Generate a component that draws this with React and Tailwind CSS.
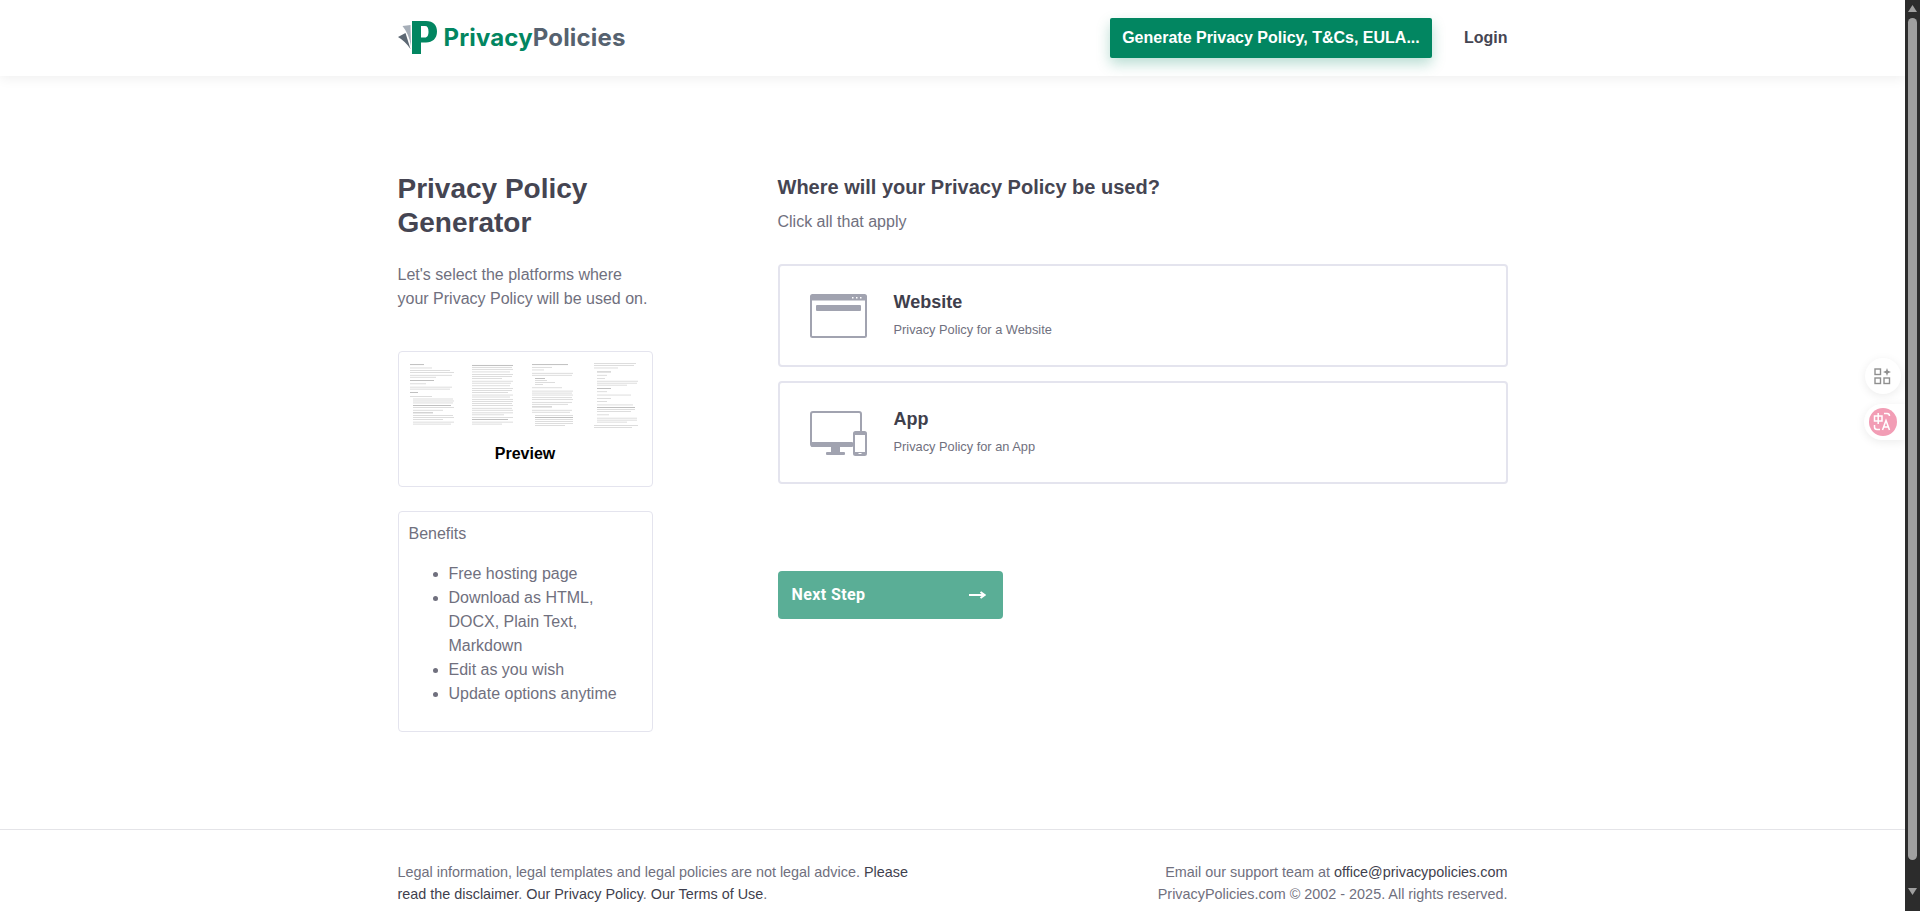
import React from "react";

const pages = [
  { x: 0, lines: [[0,2,14,1],[0,7,22,0],[0,11,40,0],[0,14,44,0],[0,18,42,0],[0,21,26,0],[0,26,24,1],[0,31,16,0],[0,36,42,0],[0,39,40,0],[0,44,8,1],[0,50,22,0],[3,54,40,0],[3,57,41,0],[3,60,40,0],[3,64,38,1],[3,67,41,0],[3,71,30,0],[3,75,20,1],[3,79,40,0],[3,82,41,0],[3,85,30,0],[3,89,41,0],[3,92,38,0]] },
  { x: 62, lines: [[0,3,41,1],[0,6,40,0],[0,9,41,0],[0,13,38,0],[0,17,41,0],[0,20,40,0],[0,23,30,0],[0,27,41,0],[0,30,39,0],[0,34,38,0],[0,38,41,0],[0,41,40,0],[0,44,36,0],[0,48,41,0],[0,51,38,0],[0,55,41,0],[0,58,41,0],[0,61,40,0],[0,64,41,0],[0,68,40,0],[0,71,41,0],[0,75,41,0],[0,78,32,0],[0,82,41,0],[0,85,36,1],[0,89,41,0],[0,92,30,0]] },
  { x: 122, lines: [[0,2,36,1],[0,6,20,0],[0,10,12,0],[0,15,41,0],[0,18,40,0],[3,23,10,1],[3,26,12,0],[3,29,20,0],[3,32,8,0],[0,37,30,0],[0,42,41,0],[0,45,40,0],[0,48,41,0],[0,52,40,0],[0,55,41,0],[0,59,40,0],[0,62,36,0],[0,66,20,1],[0,71,40,0],[0,74,38,0],[3,79,38,0],[3,82,38,1],[3,85,38,0],[3,88,38,0],[3,91,38,0],[3,94,30,0]] },
  { x: 184, lines: [[0,0,42,0],[0,3,40,0],[0,7,24,0],[3,13,14,1],[3,18,10,0],[3,23,8,0],[3,27,41,0],[3,30,40,0],[3,33,30,0],[3,38,14,1],[3,43,10,0],[3,48,34,0],[3,53,14,0],[3,58,10,0],[3,63,36,0],[3,67,38,1],[3,70,38,0],[3,73,34,0],[3,78,12,0],[3,83,40,0],[3,86,40,0],[3,89,30,0],[0,94,44,0],[0,97,38,0]] },
];

function DocPreview() {
  return (
    <svg width="232" height="66" viewBox="0 0 232 100" preserveAspectRatio="none" className="block blur-[0.5px]">
      {pages.map((p, i) => (
        <g key={i}>
          {p.lines.map((l, j) => (
            <rect key={j} x={p.x + l[0]} y={l[1]} width={l[2]} height="1.1" fill={l[3] ? "#a8a8a8" : "#d0d0d0"} />
          ))}
        </g>
      ))}
    </svg>
  );
}

function Logo() {
  return (
    <svg width="40" height="36" viewBox="0 0 40 36" className="block">
      <path d="M0 17 L7.5 13 L12.5 29 Q7 21 0 17 Z" fill="#5c6773" />
      <path d="M4.5 6 L12.5 5 L13 26 Q11 14 4.5 6 Z" fill="#a6aeb8" />
      <path d="M14 1 H28 C35.5 1 39 5.5 39 11.5 C39 18.5 34.5 22.5 28 22.5 H23 V34 H14 Z M23 6 V17.5 H27 C29.5 17.5 30.5 15 30.5 11.7 C30.5 8 29.5 6 27 6 Z" fill="#028661" fillRule="evenodd" />
    </svg>
  );
}

function WebsiteIcon() {
  return (
    <svg width="57" height="45" viewBox="0 0 57 45" className="block">
      <rect x="1" y="1" width="55" height="42" rx="1.5" fill="none" stroke="#a1a3b0" strokeWidth="2" />
      <rect x="1" y="1" width="55" height="5.5" fill="#a1a3b0" />
      <rect x="6" y="11" width="45" height="6" rx="1" fill="#a1a3b0" />
      <rect x="42" y="3" width="1.5" height="1.5" fill="#fff" />
      <rect x="46" y="3" width="1.5" height="1.5" fill="#fff" />
      <rect x="50" y="3" width="1.5" height="1.5" fill="#fff" />
    </svg>
  );
}

function AppIcon() {
  return (
    <svg width="57" height="45" viewBox="0 0 57 45" className="block">
      <path d="M51 20 V3 Q51 1 49 1 H3 Q1 1 1 3 V33 Q1 35 3 35 H42" fill="none" stroke="#a1a3b0" strokeWidth="2" />
      <rect x="1" y="31" width="42" height="5" rx="1" fill="#a1a3b0" />
      <rect x="21" y="36" width="9" height="6" fill="#a1a3b0" />
      <rect x="16" y="41" width="19" height="3" rx="1" fill="#a1a3b0" />
      <rect x="44" y="21" width="12" height="23" rx="1.5" fill="#fff" stroke="#a1a3b0" strokeWidth="2" />
      <rect x="44" y="21" width="12" height="3" fill="#a1a3b0" />
      <rect x="44" y="41" width="12" height="3" fill="#a1a3b0" />
      <rect x="48.5" y="42" width="3" height="1" fill="#fff" />
    </svg>
  );
}

function OptionCard({ icon, title, desc }) {
  return (
    <div className="h-[103px] rounded border-2 border-[#e4e4ee] bg-white flex items-center pl-[30px]">
      <div className="w-[57px] shrink-0 mt-[2px]">{icon}</div>
      <div className="ml-[27px] -mt-[2px]">
        <div className="text-[18px] leading-[24px] font-bold text-[#3f3f4c]">{title}</div>
        <div className="mt-[7px] text-[12.8px] leading-[18px] text-[#70707e]">{desc}</div>
      </div>
    </div>
  );
}

export default function App() {
  return (
    <div className="relative flex h-[911px] w-full overflow-hidden bg-white font-['Liberation_Sans',Arial,sans-serif]">
      <div className="flex-1 min-w-0 flex flex-col">
        <header className="h-[76px] shrink-0 bg-white shadow-[0_2px_12px_rgba(0,0,0,0.07)] relative z-10">
          <div className="w-[1110px] mx-auto h-full flex items-center justify-between">
            <div className="flex items-center -mt-[1px]">
              <Logo />
              <div className="ml-[6px] text-[24px] font-bold leading-[30px] tracking-[0.15px] font-['Inter','Liberation_Sans',sans-serif]">
                <span className="text-[#028661]">Privacy</span>
                <span className="text-[#56626f]">Policies</span>
              </div>
            </div>
            <div className="flex items-center">
              <div className="h-[40px] w-[322px] rounded-[2px] bg-[#028661] text-white text-[16px] font-bold flex items-center justify-center shadow-[0_6px_14px_rgba(2,134,97,0.28)]">
                Generate Privacy Policy, T&amp;Cs, EULA...
              </div>
              <div className="ml-[32px] text-[16px] font-bold text-[#454552]">Login</div>
            </div>
          </div>
        </header>

        <main className="w-[1110px] mx-auto flex-1 flex pt-[95px]">
          <aside className="w-[255px] shrink-0">
            <h1 className="mt-[1px] text-[28px] leading-[34px] font-bold text-[#454552]">Privacy Policy<br />Generator</h1>
            <p className="mt-[23px] text-[16px] leading-[24px] text-[#70707e]">Let's select the platforms where<br />your Privacy Policy will be used on.</p>
            <div className="mt-[40px] h-[136px] rounded border border-[#e4e4ee] pt-[11px] px-[11px]">
              <DocPreview />
              <div className="mt-[15px] text-center text-[16px] leading-[20px] font-bold text-black">Preview</div>
            </div>
            <div className="mt-[24px] h-[221px] rounded border border-[#e4e4ee] pt-[11px] px-[10px] text-[16px] text-[#70707e]">
              <div className="leading-[22px]">Benefits</div>
              <ul className="mt-[17px] ml-[40px] mr-[8px] list-disc leading-[24px]">
                <li>Free hosting page</li>
                <li>Download as HTML, DOCX, Plain Text, Markdown</li>
                <li>Edit as you wish</li>
                <li>Update options anytime</li>
              </ul>
            </div>
          </aside>
          <section className="ml-[125px] flex-1 min-w-0">
            <h2 className="text-[20px] leading-[28px] font-bold text-[#454552] mt-[2px]">Where will your Privacy Policy be used?</h2>
            <p className="mt-[9px] text-[16px] leading-[24px] text-[#70707e]">Click all that apply</p>
            <div className="mt-[30px] flex flex-col gap-[14px]">
              <OptionCard icon={<WebsiteIcon />} title="Website" desc="Privacy Policy for a Website" />
              <OptionCard icon={<AppIcon />} title="App" desc="Privacy Policy for an App" />
            </div>
            <div className="mt-[87px] h-[48px] w-[225px] rounded bg-[#5aae96] text-white flex items-center justify-between pl-[14px] pr-[17px] font-['Roboto',sans-serif]">
              <span className="text-[16px] font-bold tracking-[0.4px]">Next Step</span>
              <svg width="17" height="10" viewBox="0 0 17 10"><path d="M0 5 H15 M11.5 2 L15.5 5 L11.5 8" fill="none" stroke="#fff" strokeWidth="2" /></svg>
            </div>
          </section>
        </main>

        <footer className="h-[82px] shrink-0 border-t border-[#e4e4e8]">
          <div className="w-[1110px] mx-auto flex justify-between pt-[31px] text-[14.4px] leading-[22px] text-[#70707e]">
            <div>
              <div>Legal information, legal templates and legal policies are not legal advice. <span className="text-[#3f3f4e]">Please</span></div>
              <div><span className="text-[#3f3f4e]">read the disclaimer</span>. <span className="text-[#3f3f4e]">Our Privacy Policy</span>. <span className="text-[#3f3f4e]">Our Terms of Use</span>.</div>
            </div>
            <div className="text-right">
              Email our support team at <span className="text-[#3f3f4e]">office@privacypolicies.com</span><br />
              PrivacyPolicies.com © 2002 - 2025. All rights reserved.
            </div>
          </div>
        </footer>
      </div>

      <div className="w-[15px] shrink-0 bg-[#2c2c2c] flex flex-col items-center z-30">
        <svg width="15" height="15" viewBox="0 0 15 15" className="mt-[4px] shrink-0"><path d="M7.5 1 L12 8 H3 Z" fill="#9f9f9f" /></svg>
        <div className="w-[9px] h-[842px] rounded-t-[5px] rounded-b-[5px] bg-[#9f9f9f] -mt-[1px] shrink-0" />
        <svg width="15" height="15" viewBox="0 0 15 15" className="mt-[27px] shrink-0"><path d="M3 1 H12 L7.5 8 Z" fill="#9f9f9f" /></svg>
      </div>

      <div className="absolute left-[1865px] top-[358px] w-[36px] h-[36px] rounded-full bg-white shadow-[0_2px_10px_rgba(0,0,0,0.08)] flex items-center justify-center">
        <svg width="18" height="18" viewBox="0 0 18 18" fill="none" stroke="#8f8f8f" strokeWidth="1.4">
          <rect x="1" y="2" width="5.5" height="5.5" />
          <rect x="1" y="11" width="5.5" height="5.5" />
          <rect x="10" y="11" width="5.5" height="5.5" />
          <path d="M13 1 L14 3.8 L17 5 L14 6.2 L13 9 L12 6.2 L9 5 L12 3.8 Z" fill="#8f8f8f" stroke="none" />
        </svg>
      </div>
      <div className="absolute left-[1864px] top-[404px] w-[41px] h-[36px] rounded-l-full bg-white shadow-[0_2px_10px_rgba(0,0,0,0.08)] flex items-center pl-[5px]">
        <div className="w-[28px] h-[28px] rounded-full bg-[#f29db5] flex items-center justify-center">
          <svg width="20" height="20" viewBox="0 0 20 20" fill="none" stroke="#fff" strokeWidth="1.5">
            <path d="M1.5 4 H9 V9 H1.5 Z M5.2 1 V12" />
            <path d="M11 1.5 H14 Q16.5 1.5 16.5 4 M1.5 13 V15 Q1.5 17.5 4 17.5 H7" />
            <path d="M9.5 18 L13 8.5 L16.5 18 M10.8 15 H15.2" />
          </svg>
        </div>
      </div>
    </div>
  );
}
